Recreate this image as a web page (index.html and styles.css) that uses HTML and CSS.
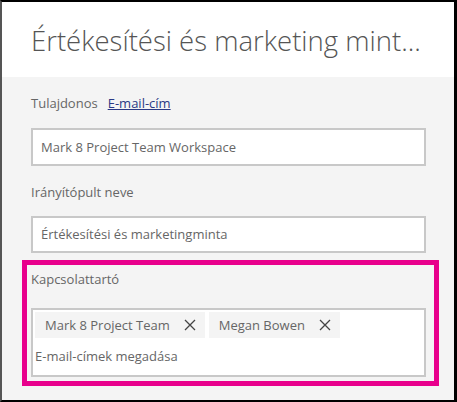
FILE: index.html
```html
<!DOCTYPE html>
<html lang="hu">
<head>
<meta charset="utf-8">
<link rel="stylesheet" href="styles.css">
</head>
<body>
<div class="frame">
  <header class="head">
    <h1 class="title">Értékesítési és marketing mint...</h1>
  </header>
  <main class="body">
    <div class="label-row">
      <span class="label">Tulajdonos</span>
      <a class="link" href="#">E-mail-cím</a>
    </div>
    <div class="input input-first">Mark 8 Project Team Workspace</div>
    <div class="label label-second">Irányítópult neve</div>
    <div class="input input-second">Értékesítési és marketingminta</div>
    <section class="highlight">
      <div class="label">Kapcsolattartó</div>
      <div class="tagbox">
        <div class="chips">
          <span class="chip">Mark 8 Project Team
            <svg class="x" viewBox="0 0 12 12" width="12" height="12"><path d="M1 1 L11 11 M11 1 L1 11" stroke="#444" stroke-width="1.3" fill="none"/></svg>
          </span>
          <span class="chip">Megan Bowen
            <svg class="x" viewBox="0 0 12 12" width="12" height="12"><path d="M1 1 L11 11 M11 1 L1 11" stroke="#444" stroke-width="1.3" fill="none"/></svg>
          </span>
        </div>
        <div class="placeholder">E-mail-címek megadása</div>
      </div>
    </section>
  </main>
</div>
</body>
</html>
```
FILE: styles.css
```css
html, body {
  margin: 0;
  padding: 0;
}
body {
  font-family: "Open Sans", "Noto Sans", sans-serif;
  color: #666;
}
.frame {
  width: 457px;
  height: 402px;
  box-sizing: border-box;
  border-top: 2px solid #000;
  border-right: 3px solid #000;
  border-bottom: 2px solid #000;
  border-left: 2px solid #555;
  background: #f4f4f4;
  display: flex;
  flex-direction: column;
}
.head {
  background: #fff;
  height: 75px;
  padding-left: 29px;
  display: flex;
  align-items: center;
}
.title {
  margin: 0;
  font-weight: 300;
  font-size: 27.5px;
  color: #555;
  white-space: nowrap;
  position: relative;
  top: 1px;
}
.body {
  padding: 16px 0 0 29px;
  display: flex;
  flex-direction: column;
}
.label-row {
  display: flex;
  gap: 10px;
  line-height: 20px;
}
.label {
  font-size: 13px;
  line-height: 20px;
  color: #666;
}
.link {
  font-size: 13px;
  color: #2b3a85;
  text-decoration: underline;
}
.input {
  width: 383px;
  height: 34px;
  box-sizing: content-box;
  border: 2px solid #c8c8c8;
  background: #fff;
  font-size: 13px;
  line-height: 34px;
  padding-left: 8px;
  color: #666;
}
.input-first {
  margin-top: 15px;
}
.label-second {
  margin-top: 16px;
}
.input-second {
  margin-top: 14px;
  height: 33px;
  line-height: 33px;
}
.highlight {
  margin-top: 7px;
  margin-left: -9px;
  width: 417px;
  border: 5px solid #e8008c;
  padding: 4px 8px 4px 4px;
  box-sizing: border-box;
}
.tagbox {
  margin-top: 19px;
  border: 2px solid #c8c8c8;
  background: #fff;
  height: 61px;
  padding: 2px;
  box-sizing: content-box;
  display: flex;
  flex-direction: column;
}
.chips {
  display: flex;
  gap: 4px;
}
.chip {
  background: #f4f4f4;
  height: 26px;
  display: flex;
  align-items: center;
  padding: 0 9px 0 10px;
  gap: 14px;
  font-size: 13px;
  color: #666;
}
.x {
  display: block;
}
.placeholder {
  margin-top: 8px;
  font-size: 13px;
  line-height: 20px;
  color: #666;
}
```
